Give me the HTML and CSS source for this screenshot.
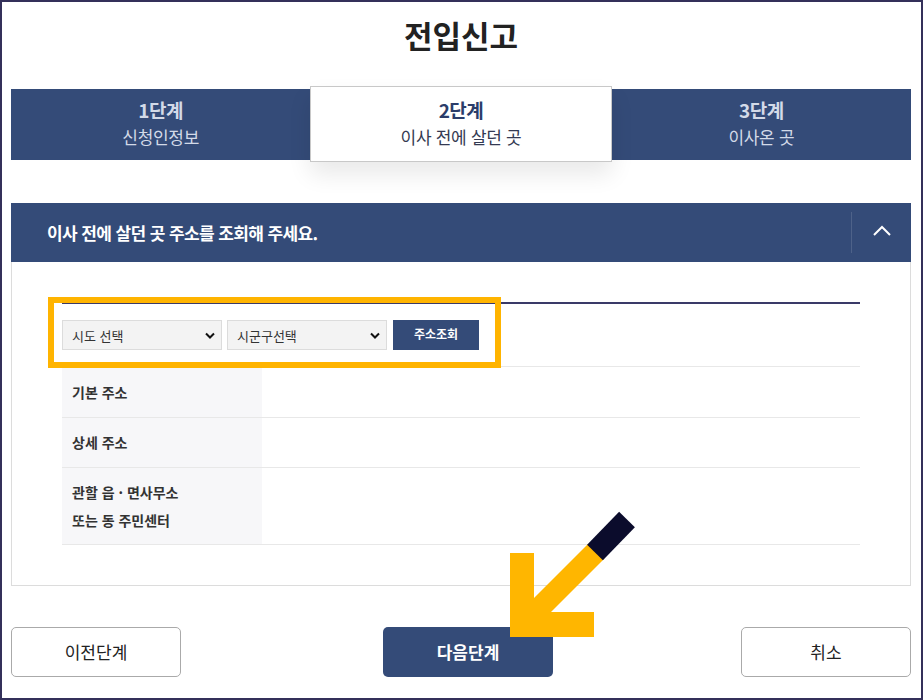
FILE: index.html
```html
<!DOCTYPE html>
<html lang="ko">
<head>
<meta charset="utf-8">
<title>전입신고</title>
<link rel="stylesheet" href="styles.css">
</head>
<body>
<div class="page">
  <h1 class="title">전입신고</h1>

  <ol class="steps">
    <li class="step">
      <span class="step-num">1단계</span>
      <span class="step-name">신청인정보</span>
    </li>
    <li class="step active">
      <span class="step-num">2단계</span>
      <span class="step-name">이사 전에 살던 곳</span>
    </li>
    <li class="step">
      <span class="step-num">3단계</span>
      <span class="step-name">이사온 곳</span>
    </li>
  </ol>

  <section class="panel">
    <header class="panel-head">
      <h2>이사 전에 살던 곳 주소를 조회해 주세요.</h2>
      <button class="toggle" type="button" aria-label="접기">
        <svg width="18" height="12" viewBox="0 0 18 12"><polyline points="1,10 9,2 17,10" fill="none" stroke="#fff" stroke-width="2"/></svg>
      </button>
    </header>
    <div class="panel-body">
      <div class="search-row">
        <div class="select sido">
          <span>시도 선택</span>
          <svg width="10" height="7" viewBox="0 0 10 7"><polyline points="1,1.5 5,5.5 9,1.5" fill="none" stroke="#111" stroke-width="2"/></svg>
        </div>
        <div class="select sigungu">
          <span>시군구선택</span>
          <svg width="10" height="7" viewBox="0 0 10 7"><polyline points="1,1.5 5,5.5 9,1.5" fill="none" stroke="#111" stroke-width="2"/></svg>
        </div>
        <button class="btn-search" type="button">주소조회</button>
      </div>
      <table class="addr">
        <tr>
          <th>기본 주소</th>
          <td></td>
        </tr>
        <tr>
          <th>상세 주소</th>
          <td></td>
        </tr>
        <tr class="tall">
          <th>관할 읍 · 면사무소<br>또는 동 주민센터</th>
          <td></td>
        </tr>
      </table>
      <div class="highlight"></div>
    </div>
  </section>

  <div class="actions">
    <button class="btn btn-outline" type="button">이전단계</button>
    <button class="btn btn-primary" type="button">다음단계</button>
    <button class="btn btn-outline" type="button">취소</button>
  </div>

  <svg class="pointer" width="923" height="700" viewBox="0 0 923 700">
    <line x1="596" y1="551.5" x2="522" y2="625.5" stroke="#ffb600" stroke-width="22"/>
    <polygon points="510,553 534,553 534,612 594,612 594,637 510,637" fill="#ffb600"/>
    <line x1="627" y1="519.5" x2="595" y2="552.5" stroke="#0b0c2c" stroke-width="22"/>
  </svg>
</div>
</body>
</html>
```

FILE: styles.css
```css
* {
  box-sizing: border-box;
}

html, body {
  margin: 0;
  padding: 0;
  background: #fff;
}

.page {
  position: relative;
  width: 923px;
  height: 700px;
  border: 2px solid #34305a;
  padding: 0 10px 0 9px;
  overflow: hidden;
  font-family: "Noto Sans CJK KR", "Noto Sans", sans-serif;
  color: #222;
}

button {
  font-family: inherit;
  cursor: pointer;
}

.title {
  margin: 0;
  padding-top: 13px;
  font-size: 31px;
  line-height: 40px;
  font-weight: 700;
  text-align: center;
  color: #222;
}

.steps {
  display: flex;
  align-items: center;
  list-style: none;
  margin: 31px 0 0;
  padding: 0;
}

.step {
  flex: 1;
  height: 71px;
  padding-bottom: 3px;
  display: flex;
  flex-direction: column;
  align-items: center;
  justify-content: center;
  background: #344b78;
  color: #d3dae8;
}

.step.active {
  position: relative;
  z-index: 1;
  height: 76px;
  background: #fff;
  border: 1px solid #c8c8c8;
  box-shadow: 0 12px 22px rgba(0, 0, 0, 0.09);
}

.step-num {
  font-size: 19px;
  line-height: 28px;
  font-weight: 700;
  letter-spacing: -0.5px;
}

.step-name {
  font-size: 17px;
  line-height: 25px;
  letter-spacing: -0.3px;
}

.step.active .step-num {
  color: #2b3d6a;
}

.step.active .step-name {
  color: #343a52;
}

.panel {
  margin-top: 41px;
}

.panel-head {
  display: flex;
  align-items: center;
  height: 59px;
  padding-left: 36px;
  background: #344b78;
}

.panel-head h2 {
  margin: 0;
  font-size: 17px;
  font-weight: 700;
  color: #fff;
  letter-spacing: -0.6px;
}

.toggle {
  margin-left: auto;
  width: 60px;
  height: 41px;
  padding: 0 0 4px;
  display: flex;
  align-items: center;
  justify-content: center;
  background: transparent;
  border: 0;
  border-left: 1px solid rgba(255, 255, 255, 0.13);
}

.panel-body {
  position: relative;
  padding: 40px 50px;
  border: 1px solid #dcdcdc;
  border-top: 0;
}

.search-row {
  display: flex;
  align-items: center;
  gap: 5px;
  padding: 16px 0 16px;
  border-top: 2px solid #3a3a68;
  border-bottom: 1px solid #e8e8e8;
}

.select {
  display: flex;
  align-items: center;
  justify-content: space-between;
  height: 30px;
  padding: 0 6px 0 9px;
  background: #f3f3f3;
  border: 1px solid #dcdcdc;
  font-size: 13px;
  color: #333;
}

.select.sido {
  width: 160px;
}

.select.sigungu {
  width: 160px;
}

.btn-search {
  margin-left: 1px;
  width: 86px;
  height: 30px;
  border: 0;
  background: #344b78;
  color: #fff;
  font-size: 12px;
  font-weight: 700;
  padding: 0 0 3px;
}

.addr {
  width: 100%;
  border-collapse: collapse;
}

.addr tr {
  border-bottom: 1px solid #e8e8e8;
}

.addr th {
  width: 200px;
  height: 50px;
  padding: 0 10px;
  text-align: left;
  vertical-align: middle;
  background: #f7f7f9;
  font-size: 14px;
  font-weight: 700;
  color: #333;
}

.addr tr.tall th {
  height: 77px;
  padding: 10px;
  line-height: 28px;
}

.highlight {
  position: absolute;
  left: 36px;
  top: 35px;
  width: 453px;
  height: 71px;
  border: 6px solid #ffb400;
  pointer-events: none;
}

.actions {
  display: flex;
  justify-content: space-between;
  margin-top: 41px;
}

.btn {
  width: 170px;
  height: 50px;
  border-radius: 5px;
  font-size: 17px;
}

.btn-outline {
  background: #fff;
  border: 1px solid #aaa;
  color: #222;
}

.btn-primary {
  margin-left: 14px;
  background: #344b78;
  border: 0;
  color: #fff;
  font-weight: 700;
}

.pointer {
  position: absolute;
  left: -2px;
  top: -2px;
  pointer-events: none;
}
```
